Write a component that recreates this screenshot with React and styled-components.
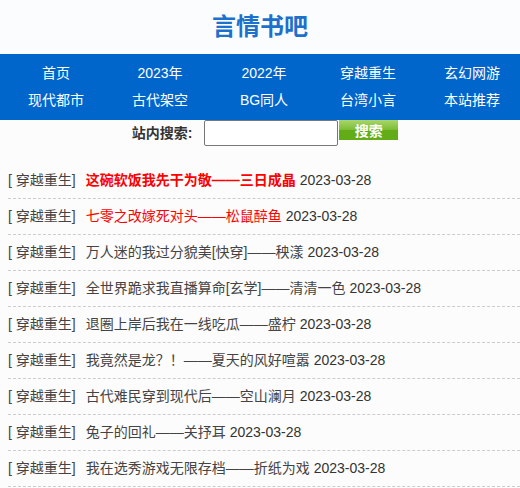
import React from 'react';
import styled, { createGlobalStyle } from 'styled-components';

const GlobalStyle = createGlobalStyle`
  html, body {
    margin: 0;
    padding: 0;
    background: #fcfcfc;
  }
  body {
    font-family: "Liberation Sans", "Noto Sans CJK SC", sans-serif;
    font-size: 14px;
    color: #333;
  }
`;

const Page = styled.div`
  width: 520px;
  overflow: hidden;
`;

const Header = styled.div`
  height: 54px;
  display: flex;
  align-items: center;
  justify-content: center;
  background: #fbfcfd;

  h1 {
    margin: 0;
    font-size: 24px;
    font-weight: 700;
    color: #1d70cb;
    line-height: 1;
  }
`;

const Nav = styled.ul`
  margin: 0;
  padding: 6px 0 6px 4px;
  list-style: none;
  background: #0066cc;
  display: grid;
  grid-template-columns: repeat(5, 104px);
  grid-auto-rows: 27px;

  li {
    text-align: center;
    line-height: 27px;
    color: #fff;
    font-size: 14px;
    white-space: nowrap;
  }
`;

const Search = styled.form`
  display: flex;
  align-items: flex-start;
  justify-content: center;
  padding-left: 10px;
  height: 26px;

  label {
    font-weight: 700;
    color: #333;
    line-height: 26px;
    margin-right: 12px;
  }

  input {
    box-sizing: border-box;
    width: 134px;
    height: 26px;
    margin: 0 1px 0 0;
    border: 1px solid #777;
    border-radius: 2px;
    background: #fff;
  }

  button {
    width: 59px;
    height: 20px;
    border: 0;
    padding: 0;
    color: #fff;
    font-weight: 700;
    font-size: 14px;
    font-family: inherit;
    background: linear-gradient(#a8d66a 0%, #7cbd34 50%, #62ad17 51%, #62ad17 100%);
  }
`;

const List = styled.ul`
  margin: 17px 0 0;
  padding: 0 0 0 8px;
  list-style: none;
`;

const Row = styled.li`
  height: 35px;
  line-height: 35px;
  border-bottom: 1px dashed #ccc;
  white-space: nowrap;
  color: #444;
`;

const Cat = styled.span`
  color: #444;
  margin-right: 10px;
`;

const Title = styled.span`
  color: ${p => (p.$hot ? '#ff0000' : '#444')};
  font-weight: ${p => (p.$bold ? 700 : 400)};
`;

const Date = styled.span`
  color: #333;
  margin-left: 4px;
`;

const navItems = [
  '首页', '2023年', '2022年', '穿越重生', '玄幻网游',
  '现代都市', '古代架空', 'BG同人', '台湾小言', '本站推荐',
];

const books = [
  { title: '这碗软饭我先干为敬——三日成晶', hot: true, bold: true },
  { title: '七零之改嫁死对头——松鼠醉鱼', hot: true },
  { title: '万人迷的我过分貌美[快穿]——秧漾' },
  { title: '全世界跪求我直播算命[玄学]——清清一色' },
  { title: '退圈上岸后我在一线吃瓜——盛柠' },
  { title: '我竟然是龙？！——夏天的风好喧嚣' },
  { title: '古代难民穿到现代后——空山澜月' },
  { title: '兔子的回礼——关抒耳' },
  { title: '我在选秀游戏无限存档——折纸为戏' },
];

const App = () => {
  return (
    <Page>
      <GlobalStyle />
      <Header>
        <h1>言情书吧</h1>
      </Header>
      <Nav>
        {navItems.map(item => (
          <li key={item}>{item}</li>
        ))}
      </Nav>
      <Search onSubmit={e => e.preventDefault()}>
        <label>站内搜索:</label>
        <input type="text" />
        <button type="submit">搜索</button>
      </Search>
      <List>
        {books.map(book => (
          <Row key={book.title}>
            <Cat>[ 穿越重生]</Cat>
            <Title $hot={book.hot} $bold={book.bold}>{book.title}</Title>
            <Date>2023-03-28</Date>
          </Row>
        ))}
      </List>
    </Page>
  );
};

export default App;
